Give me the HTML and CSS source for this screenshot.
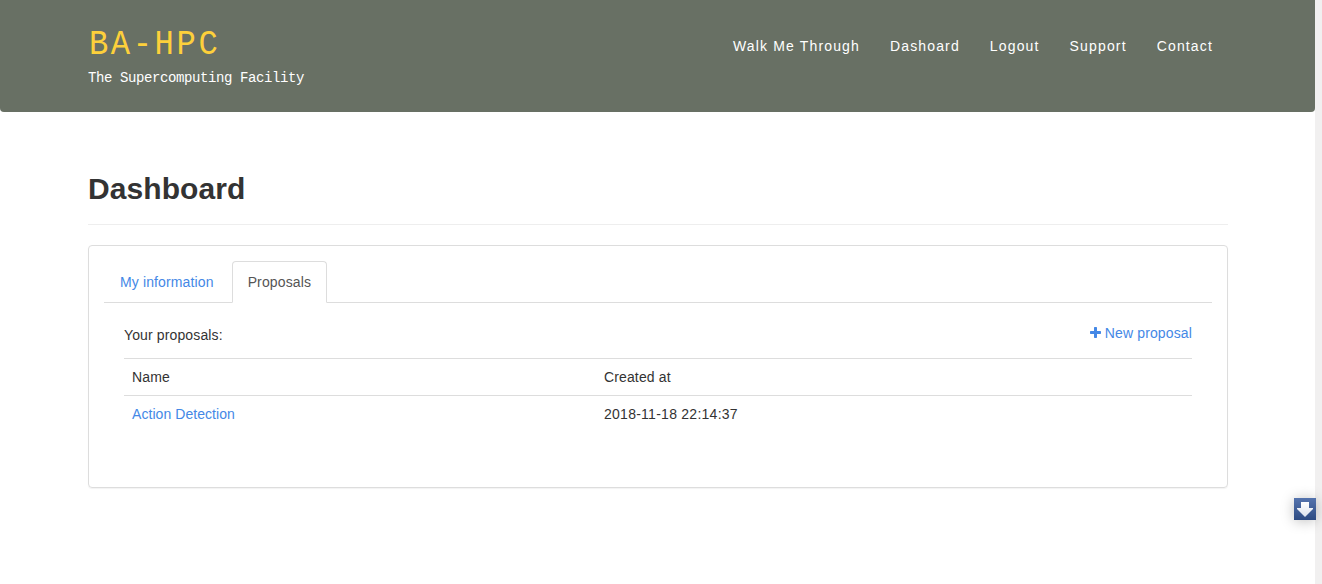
FILE: index.html
```html
<!DOCTYPE html>
<html lang="en">
<head>
<meta charset="utf-8">
<title>Dashboard</title>
<link rel="stylesheet" href="styles.css">
</head>
<body>
<div class="page">
  <header class="navbar">
    <div class="brand">
      <a class="brand-name">BA-HPC</a>
      <p class="tagline">The Supercomputing Facility</p>
    </div>
    <nav class="menu">
      <a>Walk Me Through</a><a>Dashoard</a><a>Logout</a><a>Support</a><a>Contact</a>
    </nav>
  </header>
  <main class="container">
    <h1 class="title">Dashboard</h1>
    <section class="panel">
      <div class="tabs"><a class="tab">My information</a><a class="tab active">Proposals</a></div>
      <div class="content">
        <div class="toolbar">
          <span>Your proposals:</span>
          <a class="new"><svg class="plus" viewBox="0 0 11 11"><path d="M4.7 0h1.6q.7 0 .7.7V4h3.300q.7 0 .7.7v1.600q0 .7-.7.7H7v3.300q0 .7-.7.7H4.700q-.7 0-.7-.7V7H.7Q0 7 0 6.300V4.700Q0 4 .7 4H4V.7Q4 0 4.700 0z" fill="currentColor"/></svg>New proposal</a>
        </div>
        <table class="table">
          <tr><td class="name">Name</td><td>Created at</td></tr>
          <tr><td><a>Action Detection</a></td><td class="date">2018-11-18 22:14:37</td></tr>
        </table>
      </div>
    </section>
  </main>
</div>
<div class="scroll-button">
  <svg viewBox="0 0 22 22" width="22" height="22">
    <defs><linearGradient id="arrow" x2="0" y2="1"><stop stop-color="#fff"/><stop offset="1" stop-color="#dde3ed"/></linearGradient></defs>
    <path d="M7 4h8v6h4v1l-8 8-8-8v-1h4z" fill="url(#arrow)"/>
  </svg>
</div>
</body>
</html>
```
FILE: styles.css
```css
* { box-sizing: border-box; }
html { height: 100%; background: #f1f0f0; }
body { margin: 0; height: 584px; overflow: hidden; font: 14px/20px "Liberation Sans", Arial, sans-serif; color: #333; }
a { color: #4488e6; text-decoration: none; }
.page { width: 1315px; height: 584px; background: #fff; }
.navbar { display: flex; justify-content: space-between; height: 112px; padding: 26px 102px 0 88px; background: #687064; border-radius: 0 0 4px 4px; }
.brand { width: 250px; }
.brand-name { display: block; padding-left: 1px; font: 35px/38px "Liberation Mono", monospace; letter-spacing: 2.8px; color: #fdd03b; transform: scaleX(.92); transform-origin: left; white-space: nowrap; }
.tagline { margin: 4px 0 0; font: 14px/20px "Liberation Mono", monospace; letter-spacing: -.4px; color: #fff; white-space: nowrap; }
.menu { display: flex; gap: 30px; padding-top: 10px; }
.menu a { color: #fff; letter-spacing: 1.15px; }
.container { width: 1140px; margin-left: 88px; padding-top: 57px; }
.title { height: 56px; margin: 0 0 20px; border-bottom: 1px solid #eee; font-size: 30px; line-height: 40px; letter-spacing: .07px; }
.panel { height: 243px; padding: 15px; border: 1px solid #ddd; border-radius: 4px; box-shadow: 0 1px 1px rgba(0,0,0,.05); letter-spacing: .13px; }
.tabs { display: flex; height: 42px; border-bottom: 1px solid #ddd; }
.tab { height: 42px; padding: 10px 15px; border: 1px solid transparent; border-radius: 4px 4px 0 0; margin-right: 2px; }
.tab.active { color: #555; background: #fff; border-color: #ddd #ddd #fff; }
.content { padding: 20px 20px 0; }
.toolbar { display: flex; justify-content: space-between; height: 35px; padding-top: 2px; }
.new { display: flex; margin-top: -2px; height: 20px; }
.plus { width: 11px; height: 11px; margin: 4px 4px 0 0; }
.table { width: 100%; border-collapse: collapse; }
.table td { height: 37px; padding: 8px; border-top: 1px solid #ddd; text-align: left; }
.table .name { width: 472px; }
.table a { letter-spacing: .06px; }
.table .date { letter-spacing: .26px; }
.scroll-button { position: fixed; left: 1294px; top: 498px; width: 22px; height: 22px; background: linear-gradient(#5574ae, #2e4b82); box-shadow: 0 1px 13px rgba(0,0,0,.25); }
.scroll-button svg { display: block; }
```
